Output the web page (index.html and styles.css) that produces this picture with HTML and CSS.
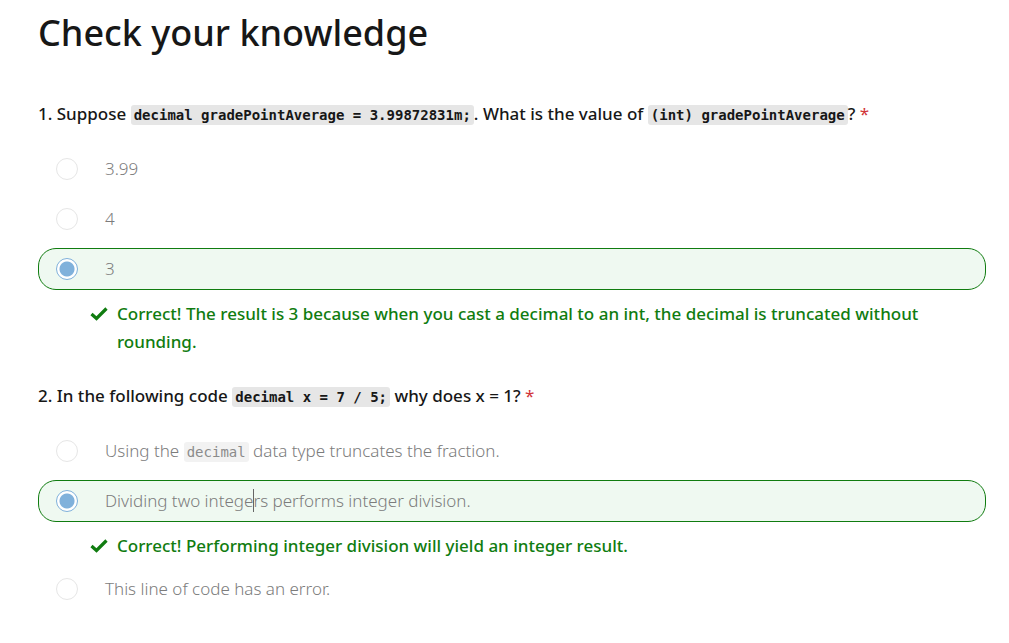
FILE: index.html
```html
<!DOCTYPE html>
<html lang="en">
<head>
<meta charset="utf-8">
<meta name="viewport" content="width=device-width, initial-scale=1">
<title>Check your knowledge</title>
<link rel="stylesheet" href="styles.css">
</head>
<body>
<main class="quiz">
  <h1 class="quiz-title">Check your knowledge</h1>
  <form class="questions">
    <fieldset class="question">
      <legend class="question-title">1. Suppose <code>decimal gradePointAverage = 3.99872831m;</code>. What is the value of <code>(int) gradePointAverage</code>? <span class="required">*</span></legend>
      <div class="choices">
        <label class="choice"><input class="radio" type="radio" name="q1" disabled><span class="choice-text">3.99</span></label>
        <label class="choice"><input class="radio" type="radio" name="q1" disabled><span class="choice-text">4</span></label>
        <label class="choice correct"><input class="radio" type="radio" name="q1" checked disabled><span class="choice-text">3</span></label>
        <div class="feedback">
          <svg class="check" viewBox="0 0 18 14" aria-hidden="true"><path d="M1.5 7 6.5 11.5 16.5 1.5" fill="none" stroke="currentColor" stroke-width="3.2"/></svg>
          <p class="feedback-text">Correct! The result is 3 because when you cast a decimal to an int, the decimal is truncated without rounding.</p>
        </div>
      </div>
    </fieldset>
    <fieldset class="question">
      <legend class="question-title">2. In the following code <code>decimal x = 7 / 5;</code> why does x = 1? <span class="required">*</span></legend>
      <div class="choices">
        <label class="choice"><input class="radio" type="radio" name="q2" disabled><span class="choice-text">Using the <code>decimal</code> data type truncates the fraction.</span></label>
        <label class="choice correct"><input class="radio" type="radio" name="q2" checked disabled><span class="choice-text">Dividing two intege<span class="caret"></span>rs performs integer division.</span></label>
        <div class="feedback">
          <svg class="check" viewBox="0 0 18 14" aria-hidden="true"><path d="M1.5 7 6.5 11.5 16.5 1.5" fill="none" stroke="currentColor" stroke-width="3.2"/></svg>
          <p class="feedback-text">Correct! Performing integer division will yield an integer result.</p>
        </div>
        <label class="choice"><input class="radio" type="radio" name="q2" disabled><span class="choice-text">This line of code has an error.</span></label>
      </div>
    </fieldset>
  </form>
</main>
</body>
</html>
```
FILE: styles.css
```css
* { box-sizing: border-box; }

body {
  margin: 0;
  background: #fff;
  color: #171717;
  font-family: "Noto Sans", "Open Sans", sans-serif;
  font-size: 17px;
  line-height: 28px;
}

.quiz { padding: 9px 23px 24px 38px; }

.quiz-title {
  margin: 0 0 43px;
  font-size: 36px;
  line-height: 48px;
  font-weight: 500;
}

.questions {
  display: flex;
  flex-direction: column;
  gap: 26px;
}

.question {
  min-width: 0;
  margin: 0;
  padding: 0;
  border: 0;
}

.question-title {
  padding: 0;
  margin-bottom: 19px;
  font-size: 17px;
  font-weight: 500;
}

code {
  padding: 2px 3px;
  border-radius: 3px;
  background: #e6e6e6;
  font-family: "DejaVu Sans Mono", monospace;
  font-size: 14px;
}

.question-title code { font-weight: 700; }

.required {
  color: #d13438;
  font-weight: 400;
}

.choices {
  display: flex;
  flex-direction: column;
  gap: 8px;
}

.choice {
  display: flex;
  align-items: center;
  gap: 27px;
  min-height: 42px;
  padding: 0 17px;
  border: 1px solid transparent;
  border-radius: 18px;
}

.choice.correct {
  border-color: #107c10;
  background: #eff9f1;
}

.radio {
  flex: none;
  appearance: none;
  width: 22px;
  height: 22px;
  margin: 0;
  border: 1px solid #e6e6e6;
  border-radius: 50%;
  background: #fff;
}

.radio:checked {
  border-color: #80b1db;
  background: radial-gradient(circle, #80b1db 7px, #fff 8px);
}

.choice-text {
  color: #7c7c7c;
  font-weight: 300;
}

.choice-text code {
  background: #f2f2f2;
  color: #8b8b8b;
  font-weight: 400;
}

.caret {
  position: relative;
}

.caret::after {
  content: "";
  position: absolute;
  top: 0;
  left: 0;
  width: 1px;
  height: 23px;
  background: #666;
}

.feedback {
  display: flex;
  gap: 9px;
  padding: 2px 53px 0 52px;
  color: #107c10;
}

.check {
  flex: none;
  width: 18px;
  height: 28px;
}

.feedback-text {
  margin: 0;
  font-weight: 500;
}
```
